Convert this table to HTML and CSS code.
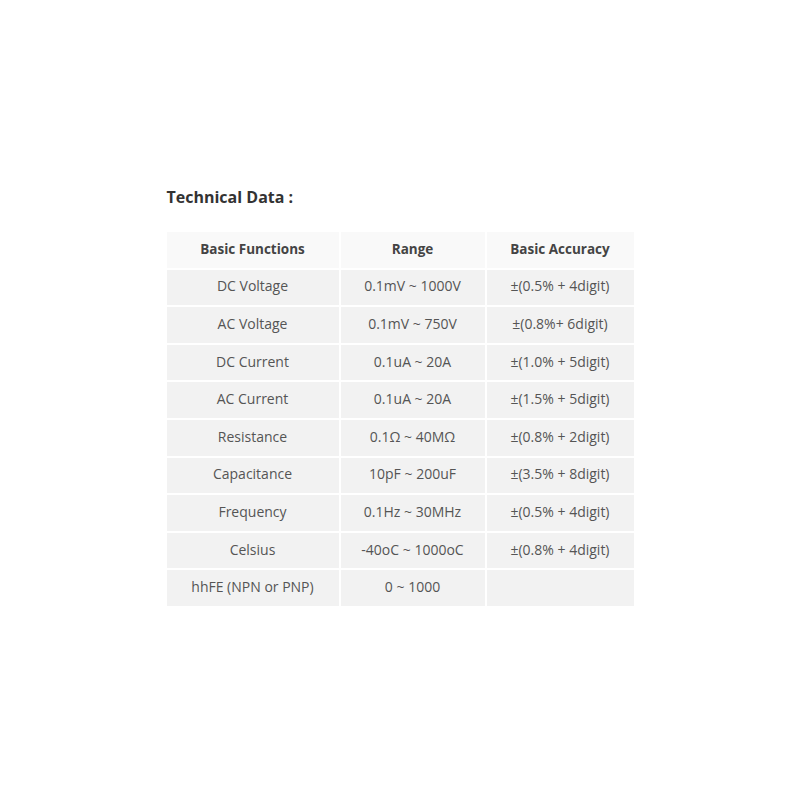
FILE: index.html
```html
<!DOCTYPE html>
<html>
<head>
<meta charset="utf-8">
<link rel="stylesheet" href="styles.css">
</head>
<body>
<div class="wrap">
  <h3 class="title">Technical Data :</h3>
  <table class="spec">
    <thead>
      <tr><th class="c1">Basic Functions</th><th class="c2">Range</th><th class="c3">Basic Accuracy</th></tr>
    </thead>
    <tbody>
      <tr><td>DC Voltage</td><td>0.1mV ~ 1000V</td><td>±(0.5% + 4digit)</td></tr>
      <tr><td>AC Voltage</td><td>0.1mV ~ 750V</td><td>±(0.8%+ 6digit)</td></tr>
      <tr><td>DC Current</td><td>0.1uA ~ 20A</td><td>±(1.0% + 5digit)</td></tr>
      <tr><td>AC Current</td><td>0.1uA ~ 20A</td><td>±(1.5% + 5digit)</td></tr>
      <tr><td>Resistance</td><td>0.1Ω ~ 40MΩ</td><td>±(0.8% + 2digit)</td></tr>
      <tr><td>Capacitance</td><td>10pF ~ 200uF</td><td>±(3.5% + 8digit)</td></tr>
      <tr><td>Frequency</td><td>0.1Hz ~ 30MHz</td><td>±(0.5% + 4digit)</td></tr>
      <tr><td>Celsius</td><td>-40oC ~ 1000oC</td><td>±(0.8% + 4digit)</td></tr>
      <tr><td>hhFE (NPN or PNP)</td><td>0 ~ 1000</td><td></td></tr>
    </tbody>
  </table>
</div>
</body>
</html>
```
FILE: styles.css
```css
html, body {
  margin: 0;
  padding: 0;
  background: #ffffff;
}
body {
  font-family: "Open Sans", "Noto Sans", sans-serif;
  color: #555555;
}
.wrap {
  width: 467px;
  margin: 0 auto;
  padding-top: 186px;
}
.title {
  margin: 0 0 24px 0;
  font-size: 16px;
  line-height: 22px;
  font-weight: 700;
  color: #333333;
}
.spec {
  border-collapse: separate;
  border-spacing: 2px;
  margin: -2px;
  width: 471px;
  table-layout: fixed;
}
.spec th, .spec td {
  height: 33.6px;
  padding: 0 0 2px 0;
  text-align: center;
  vertical-align: middle;
  font-size: 14px;
  line-height: 20px;
}
.spec th {
  background: #f9f9f9;
  color: #444444;
  font-weight: 700;
  font-size: 13.5px;
}
.spec td {
  background: #f2f2f2;
  color: #555555;
}
.c1 { width: 172px; }
.c2 { width: 144px; }
.c3 { width: 147px; }
```
